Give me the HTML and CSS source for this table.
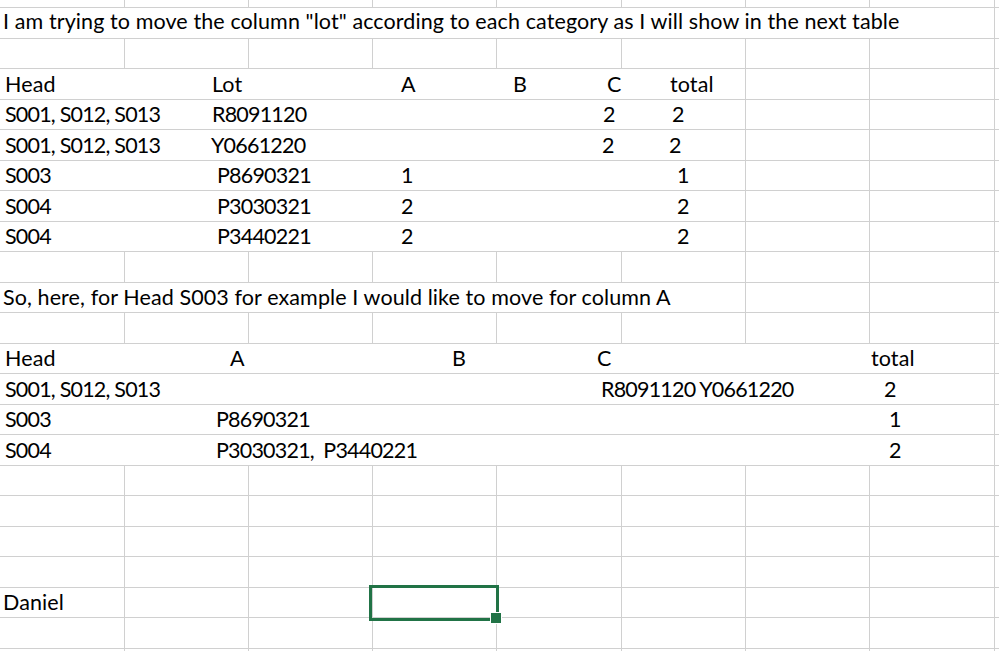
FILE: index.html
```html
<!DOCTYPE html>
<html lang="en">
<head>
<meta charset="utf-8">
<title>Sheet</title>
<link rel="stylesheet" href="styles.css">
</head>
<body>
<div class="sheet">
  <div class="row row-top">
    <div class="c"></div><div class="c"></div><div class="c"></div><div class="c"></div><div class="c"></div><div class="c"></div><div class="c"></div><div class="c"></div><div class="c end"></div>
  </div>
  <div class="row">
    <div class="c txt span8 first lift">I am trying to move the column "lot" according to each category as I will show in the next table</div><div class="c end"></div>
  </div>
  <div class="row">
    <div class="c"></div><div class="c"></div><div class="c"></div><div class="c"></div><div class="c"></div><div class="c"></div><div class="c"></div><div class="c"></div><div class="c end"></div>
  </div>
  <div class="row">
    <div class="c txt span6 t1"><span>Head</span><span>Lot</span><span>A</span><span>B</span><span class="n5">C</span><span>total</span></div><div class="c"></div><div class="c"></div><div class="c end"></div>
  </div>
  <div class="row">
    <div class="c txt span6 t1"><span class="num">S001, S012, S013</span><span class="num">R8091120</span><span></span><span></span><span class="n1">2</span><span class="n2">2</span></div><div class="c"></div><div class="c"></div><div class="c end"></div>
  </div>
  <div class="row">
    <div class="c txt span6 t1"><span class="num">S001, S012, S013</span><span class="num m1">Y0661220</span><span></span><span></span><span>2</span><span class="m1">2</span></div><div class="c"></div><div class="c"></div><div class="c end"></div>
  </div>
  <div class="row">
    <div class="c txt span6 t1"><span class="num">S003</span><span class="num n5">P8690321</span><span>1</span><span></span><span></span><span class="n7">1</span></div><div class="c"></div><div class="c"></div><div class="c end"></div>
  </div>
  <div class="row">
    <div class="c txt span6 t1"><span class="num">S004</span><span class="num n5">P3030321</span><span>2</span><span></span><span></span><span class="n7">2</span></div><div class="c"></div><div class="c"></div><div class="c end"></div>
  </div>
  <div class="row">
    <div class="c txt span6 t1"><span class="num">S004</span><span class="num n5">P3440221</span><span>2</span><span></span><span></span><span class="n7">2</span></div><div class="c"></div><div class="c"></div><div class="c end"></div>
  </div>
  <div class="row">
    <div class="c"></div><div class="c"></div><div class="c"></div><div class="c"></div><div class="c"></div><div class="c"></div><div class="c"></div><div class="c"></div><div class="c end"></div>
  </div>
  <div class="row">
    <div class="c txt span6 first">So, here, for Head S003 for example I would like to move for column A</div><div class="c"></div><div class="c"></div><div class="c end"></div>
  </div>
  <div class="row">
    <div class="c"></div><div class="c"></div><div class="c"></div><div class="c"></div><div class="c"></div><div class="c"></div><div class="c"></div><div class="c"></div><div class="c end"></div>
  </div>
  <div class="row">
    <div class="c txt span8 t2"><span>Head</span><span class="n14">A</span><span>B</span><span class="m2">C</span><span>total</span></div><div class="c end"></div>
  </div>
  <div class="row">
    <div class="c txt span8 t2"><span class="num">S001, S012, S013</span><span></span><span></span><span class="num n2">R8091120 Y0661220</span><span class="n13">2</span></div><div class="c end"></div>
  </div>
  <div class="row">
    <div class="c txt span8 t2"><span class="num">S003</span><span class="num">P8690321</span><span></span><span></span><span class="n18">1</span></div><div class="c end"></div>
  </div>
  <div class="row">
    <div class="c txt span8 t2"><span class="num">S004</span><span class="num pre">P3030321,  P3440221</span><span></span><span></span><span class="n18">2</span></div><div class="c end"></div>
  </div>
  <div class="row">
    <div class="c"></div><div class="c"></div><div class="c"></div><div class="c"></div><div class="c"></div><div class="c"></div><div class="c"></div><div class="c"></div><div class="c end"></div>
  </div>
  <div class="row">
    <div class="c"></div><div class="c"></div><div class="c"></div><div class="c"></div><div class="c"></div><div class="c"></div><div class="c"></div><div class="c"></div><div class="c end"></div>
  </div>
  <div class="row">
    <div class="c"></div><div class="c"></div><div class="c"></div><div class="c"></div><div class="c"></div><div class="c"></div><div class="c"></div><div class="c"></div><div class="c end"></div>
  </div>
  <div class="row">
    <div class="c"></div><div class="c"></div><div class="c"></div><div class="c"></div><div class="c"></div><div class="c"></div><div class="c"></div><div class="c"></div><div class="c end"></div>
  </div>
  <div class="row">
    <div class="c txt first">Daniel</div><div class="c"></div><div class="c"></div><div class="c selected"></div><div class="c"></div><div class="c"></div><div class="c"></div><div class="c"></div><div class="c end"></div>
  </div>
  <div class="row">
    <div class="c"></div><div class="c"></div><div class="c"></div><div class="c"></div><div class="c"></div><div class="c"></div><div class="c"></div><div class="c"></div><div class="c end"></div>
  </div>
  <div class="row">
    <div class="c"></div><div class="c"></div><div class="c"></div><div class="c"></div><div class="c"></div><div class="c"></div><div class="c"></div><div class="c"></div><div class="c end"></div>
  </div>
</div>
</body>
</html>
```
FILE: styles.css
```css
html, body {
  margin: 0;
  padding: 0;
  background: #ffffff;
  overflow: hidden;
}

.sheet {
  width: 999px;
  height: 651px;
  overflow: hidden;
  font-family: Lato, "Open Sans", sans-serif;
  font-size: 21.5px;
  letter-spacing: 0.1px;
  color: #000000;
}

.row {
  display: grid;
  grid-template-columns: 125px 124px 124px 124px 125px 124px 124px 125px 1fr;
  height: 30.52px;
}

.row-top {
  height: 8px;
}

.c {
  box-sizing: border-box;
  border-right: 1px solid #d0d0d0;
  border-bottom: 1px solid #d0d0d0;
  min-width: 0;
}

.c.end {
  border-right: none;
}

.txt {
  white-space: nowrap;
  line-height: 21px;
  padding-bottom: 4px;
  display: flex;
  align-items: flex-end;
}

.lift {
  padding-bottom: 6px;
}

.first {
  padding-left: 3px;
}

.span6 { grid-column: span 6; }
.span8 { grid-column: span 8; }

.t1, .t2 {
  display: grid;
  align-items: end;
  padding-left: 5px;
}

.t1 {
  grid-template-columns: 207px 189px 112px 89px 68px 1fr;
}

.t2 {
  grid-template-columns: 211px 236px 147px 272px 1fr;
}

.t1 span, .t2 span {
  display: block;
  white-space: nowrap;
}

.num { letter-spacing: -0.8px; }

.pre { white-space: pre !important; }

.n1 { padding-left: 1px; }
.n2 { padding-left: 2px; }
.n5 { padding-left: 5px; }
.n7 { padding-left: 7px; }
.n13 { padding-left: 13px; }
.n14 { padding-left: 14px; }
.n18 { padding-left: 18px; }
.m1 { margin-left: -1px; }
.m2 { margin-left: -2px; }

.selected {
  position: relative;
}

.selected::before {
  content: "";
  position: absolute;
  left: -4px;
  top: -3px;
  width: 130px;
  height: 36px;
  box-sizing: border-box;
  border: 3px solid #217346;
  z-index: 1;
}

.selected::after {
  content: "";
  position: absolute;
  left: 117px;
  top: 24px;
  width: 10px;
  height: 10px;
  background: #217346;
  border: 1px solid #ffffff;
  z-index: 2;
}
```
